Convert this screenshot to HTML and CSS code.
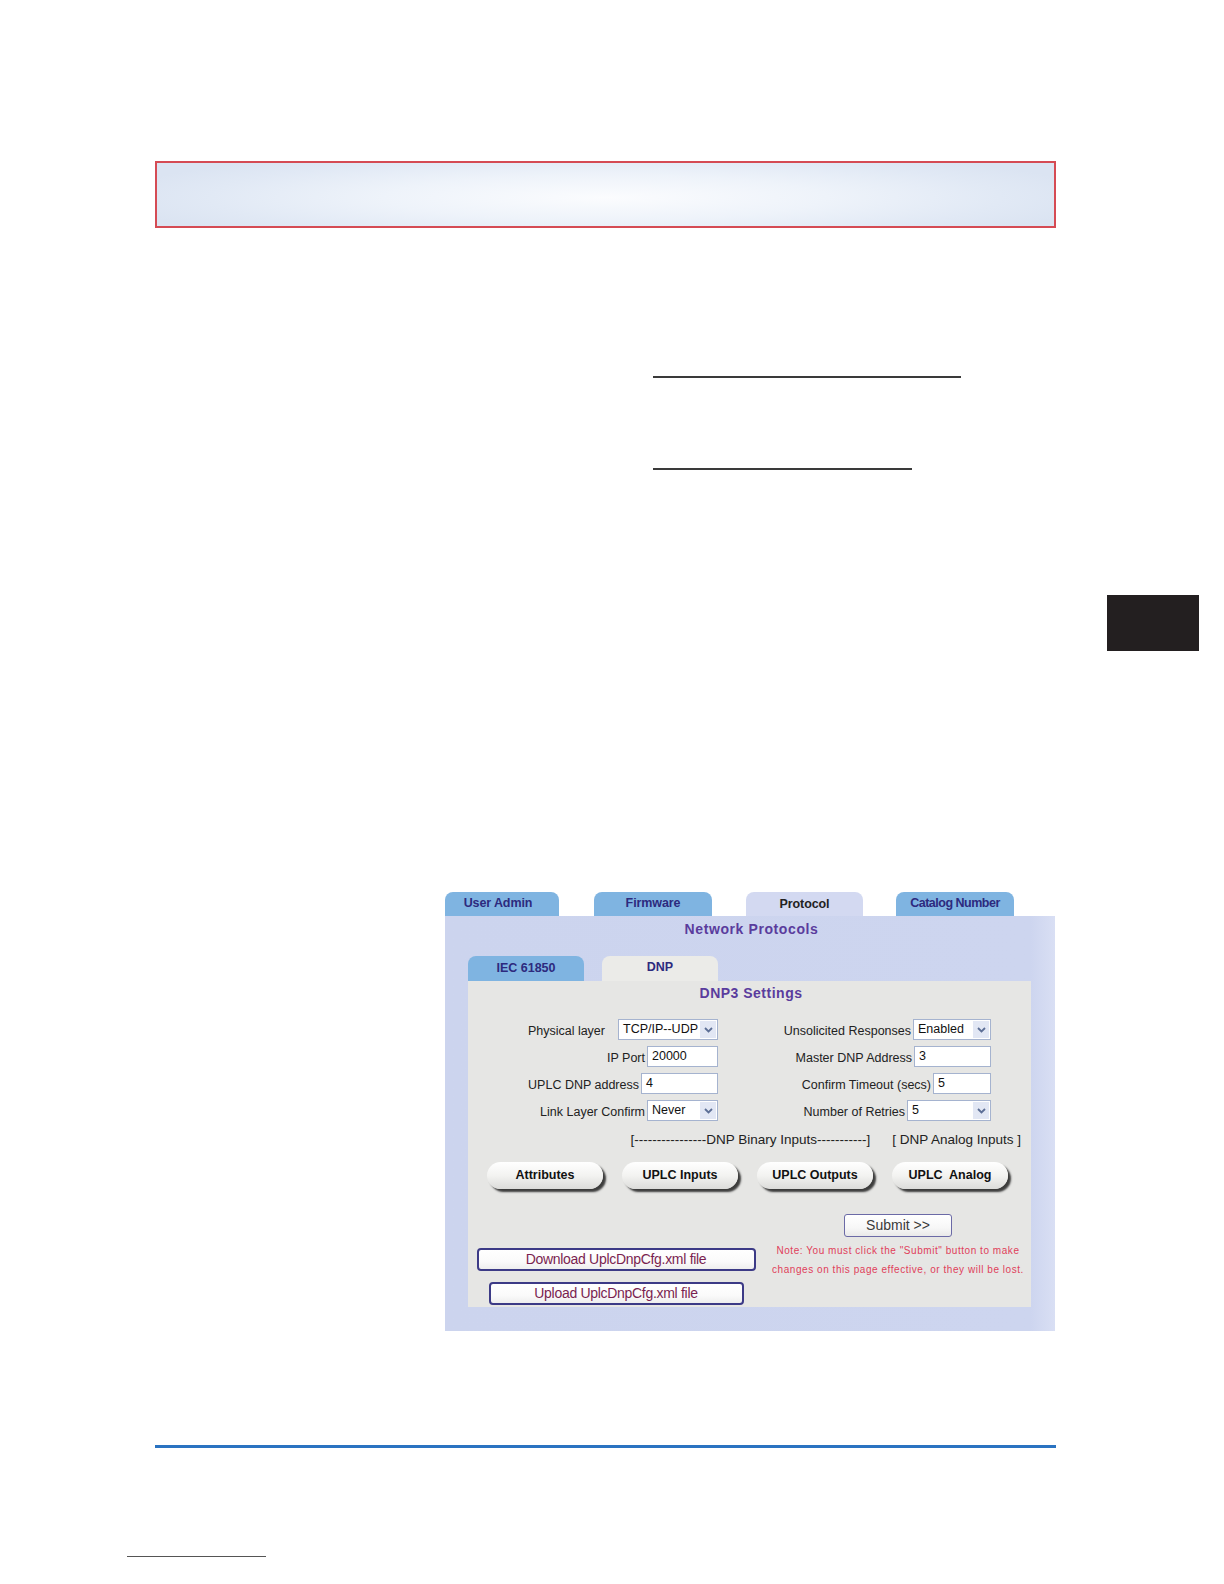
FILE: index.html
```html
<!DOCTYPE html>
<html>
<head>
<meta charset="utf-8">
<title>DNP3 Settings</title>
<link rel="stylesheet" href="styles.css">
</head>
<body>
<div class="page">
  <div class="banner"></div>
  <div class="rule rule-a"></div>
  <div class="rule rule-b"></div>
  <div class="edge-tab"></div>

  <div class="shot">
    <div class="tabs">
      <div class="tab tab-user">User Admin</div>
      <div class="tab tab-fw">Firmware</div>
      <div class="tab tab-proto active">Protocol</div>
      <div class="tab tab-cat">Catalog Number</div>
    </div>
    <div class="panel">
      <div class="panel-title">Network Protocols</div>
      <div class="subtabs">
        <div class="subtab">IEC 61850</div>
        <div class="subtab active">DNP</div>
      </div>
      <div class="inner">
        <div class="inner-title">DNP3 Settings</div>
        <div class="form">
          <div class="cell">
            <span class="lbl lbl-gap">Physical layer</span>
            <span class="field select w100">TCP/IP--UDP<span class="arrow"><svg width="9" height="6" viewBox="0 0 9 6"><path d="M1 1 L4.5 4.5 L8 1" fill="none" stroke="#5d6f96" stroke-width="1.8"/></svg></span></span>
          </div>
          <div class="cell">
            <span class="lbl">Unsolicited Responses</span>
            <span class="field select w78">Enabled<span class="arrow"><svg width="9" height="6" viewBox="0 0 9 6"><path d="M1 1 L4.5 4.5 L8 1" fill="none" stroke="#5d6f96" stroke-width="1.8"/></svg></span></span>
          </div>
          <div class="cell">
            <span class="lbl">IP Port</span>
            <span class="field w71">20000</span>
          </div>
          <div class="cell">
            <span class="lbl">Master DNP Address</span>
            <span class="field w77">3</span>
          </div>
          <div class="cell">
            <span class="lbl">UPLC DNP address</span>
            <span class="field w77">4</span>
          </div>
          <div class="cell">
            <span class="lbl">Confirm Timeout (secs)</span>
            <span class="field w58">5</span>
          </div>
          <div class="cell">
            <span class="lbl">Link Layer Confirm</span>
            <span class="field select w71">Never<span class="arrow"><svg width="9" height="6" viewBox="0 0 9 6"><path d="M1 1 L4.5 4.5 L8 1" fill="none" stroke="#5d6f96" stroke-width="1.8"/></svg></span></span>
          </div>
          <div class="cell">
            <span class="lbl">Number of Retries</span>
            <span class="field select w84">5<span class="arrow"><svg width="9" height="6" viewBox="0 0 9 6"><path d="M1 1 L4.5 4.5 L8 1" fill="none" stroke="#5d6f96" stroke-width="1.8"/></svg></span></span>
          </div>
        </div>
        <div class="groups">
          <span>[----------------DNP Binary Inputs-----------]</span>
          <span>[ DNP Analog Inputs ]</span>
        </div>
        <div class="pills">
          <div class="pill">Attributes</div>
          <div class="pill">UPLC Inputs</div>
          <div class="pill">UPLC Outputs</div>
          <div class="pill">UPLC&nbsp; Analog</div>
        </div>
        <div class="bottom">
          <div class="files">
            <div class="filebtn dl">Download UplcDnpCfg.xml file</div>
            <div class="filebtn ul">Upload UplcDnpCfg.xml file</div>
          </div>
          <div class="submit-col">
            <div class="submit">Submit &gt;&gt;</div>
            <div class="note">Note: You must click the "Submit" button to make<br>changes on this page effective, or they will be lost.</div>
          </div>
        </div>
      </div>
    </div>
  </div>

  <div class="footer-rule"></div>
  <div class="link-line"></div>
</div>
</body>
</html>
```
FILE: styles.css
```css
html, body {
  margin: 0;
  padding: 0;
  background: #ffffff;
}
body {
  font-family: "Liberation Sans", Arial, sans-serif;
  color: #222;
}
.page {
  width: 1224px;
  height: 1584px;
  padding-top: 161px;
  box-sizing: border-box;
  overflow: hidden;
}
.banner {
  margin-left: 155px;
  width: 901px;
  height: 67px;
  box-sizing: border-box;
  border: 2px solid #d54b54;
  background: radial-gradient(ellipse 55% 80% at 50% 55%, #fbfcfe 0%, #eef3fa 45%, #e1e9f5 80%, #dbe4f2 100%);
}
.rule {
  margin-left: 653px;
  height: 0;
  border-top: 2px solid #3a3a3a;
}
.rule-a {
  width: 308px;
  margin-top: 148px;
}
.rule-b {
  width: 259px;
  margin-top: 90px;
}
.edge-tab {
  margin-left: 1107px;
  margin-top: 125px;
  width: 92px;
  height: 56px;
  background: #231f20;
}

/* ---------- screenshot ---------- */
.shot {
  margin-left: 445px;
  margin-top: 241px;
  width: 610px;
}
.tabs {
  display: flex;
  height: 24px;
  align-items: flex-end;
}
.tab {
  height: 24px;
  box-sizing: border-box;
  border-radius: 8px 8px 0 0;
  background: #7fb4e1;
  color: #2d2a7e;
  font-weight: bold;
  font-size: 12.5px;
  line-height: 23px;
  text-align: center;
  padding-bottom: 2px;
  letter-spacing: -0.1px;
}
.tab.active {
  background: #d3d9f1;
  color: #222;
  line-height: 25px;
}
.tab-user { width: 114px; padding-right: 8px; }
.tab-fw { width: 118px; margin-left: 35px; }
.tab-proto { width: 117px; margin-left: 34px; }
.tab-cat { width: 118px; margin-left: 33px; letter-spacing: -0.5px; }

.panel {
  height: 415px;
  box-sizing: border-box;
  background: linear-gradient(90deg, #ccd4ee 0%, #cdd5ef 96%, #d9dff4 100%);
  padding: 0 24px 24px 23px;
}
.panel-title {
  height: 26px;
  line-height: 26px;
  text-align: center;
  color: #5a3c9d;
  font-weight: bold;
  font-size: 14px;
  letter-spacing: 0.6px;
  padding-left: 4px;
}
.subtabs {
  display: flex;
  margin-top: 14px;
  height: 25px;
}
.subtab {
  width: 116px;
  height: 25px;
  border-radius: 8px 8px 0 0;
  background: #7fb4e1;
  color: #2d2a7e;
  font-weight: bold;
  font-size: 12.5px;
  line-height: 25px;
  text-align: center;
}
.subtab.active {
  margin-left: 18px;
  background: #ebebe8;
  line-height: 23px;
}
.inner {
  height: 326px;
  box-sizing: border-box;
  background: #e6e6e4;
}
.inner-title {
  height: 24px;
  line-height: 24px;
  text-align: center;
  color: #5a3c9d;
  font-weight: bold;
  font-size: 14px;
  letter-spacing: 0.5px;
  padding-left: 3px;
}
.form {
  margin-top: 11px;
  display: grid;
  grid-template-columns: 250px 273px;
  grid-auto-rows: 27px;
}
.cell {
  display: flex;
  justify-content: flex-end;
  align-items: center;
  font-size: 12.5px;
  white-space: nowrap;
}
.lbl {
  color: #222;
  padding-top: 3px;
  margin-right: 2px;
}
.lbl-gap {
  margin-right: 13px;
}
.field {
  position: relative;
  height: 21px;
  box-sizing: border-box;
  border: 1px solid #a5b3cf;
  background: #fff;
  font-size: 12.5px;
  line-height: 19px;
  padding-left: 4px;
  color: #111;
  white-space: nowrap;
  overflow: hidden;
  flex-shrink: 0;
}
.select {
  padding-right: 18px;
}
.arrow {
  position: absolute;
  right: 1px;
  top: 1px;
  width: 16px;
  height: 17px;
  background: #e2e7f4;
  display: flex;
  align-items: center;
  justify-content: center;
}
.w100 { width: 100px; }
.w78 { width: 78px; }
.w71 { width: 71px; }
.w77 { width: 77px; }
.w58 { width: 58px; }
.w84 { width: 84px; }

.groups {
  margin-top: 8px;
  height: 16px;
  line-height: 16px;
  font-size: 13.5px;
  display: flex;
  justify-content: flex-end;
  gap: 22px;
  padding-right: 10px;
  color: #222;
  white-space: nowrap;
}
.pills {
  margin-top: 14px;
  display: flex;
  gap: 19px;
  padding-left: 19px;
  height: 29px;
}
.pill {
  width: 116px;
  height: 27px;
  border-radius: 14px;
  background: linear-gradient(180deg, #ffffff 0%, #f3f3f1 50%, #dcdcda 100%);
  box-shadow: 3px 3px 2px rgba(30, 30, 30, 0.85);
  font-weight: bold;
  font-size: 12.5px;
  line-height: 26px;
  text-align: center;
  color: #111;
}
.bottom {
  margin-top: 23px;
  display: flex;
}
.files {
  width: 296px;
  padding-top: 34px;
  display: flex;
  flex-direction: column;
  align-items: center;
  gap: 11px;
}
.filebtn {
  height: 23px;
  box-sizing: border-box;
  border: 2px solid #3c3a86;
  border-radius: 4px;
  background: linear-gradient(180deg, #ffffff 0%, #fafafa 60%, #eeeeee 100%);
  color: #7a1f50;
  font-size: 14px;
  line-height: 19px;
  text-align: center;
  letter-spacing: -0.3px;
}
.dl { width: 279px; }
.ul { width: 255px; }
.submit-col {
  width: 256px;
  padding-left: 6px;
  display: flex;
  flex-direction: column;
  align-items: center;
}
.submit {
  width: 108px;
  height: 23px;
  box-sizing: border-box;
  border: 1px solid #6b6aa6;
  border-radius: 3px;
  background: linear-gradient(180deg, #ffffff 0%, #f7f7f7 60%, #e9e9e9 100%);
  font-size: 14px;
  line-height: 21px;
  text-align: center;
  color: #3a3a3a;
}
.note {
  margin-top: 4px;
  font-size: 10px;
  line-height: 19px;
  color: #e0405a;
  text-align: center;
  letter-spacing: 0.55px;
  white-space: nowrap;
}

.footer-rule {
  margin-top: 114px;
  margin-left: 155px;
  width: 901px;
  height: 3px;
  background: #2a73c1;
}
.link-line {
  margin-top: 108px;
  margin-left: 127px;
  width: 139px;
  height: 1px;
  background: #555;
}
```
